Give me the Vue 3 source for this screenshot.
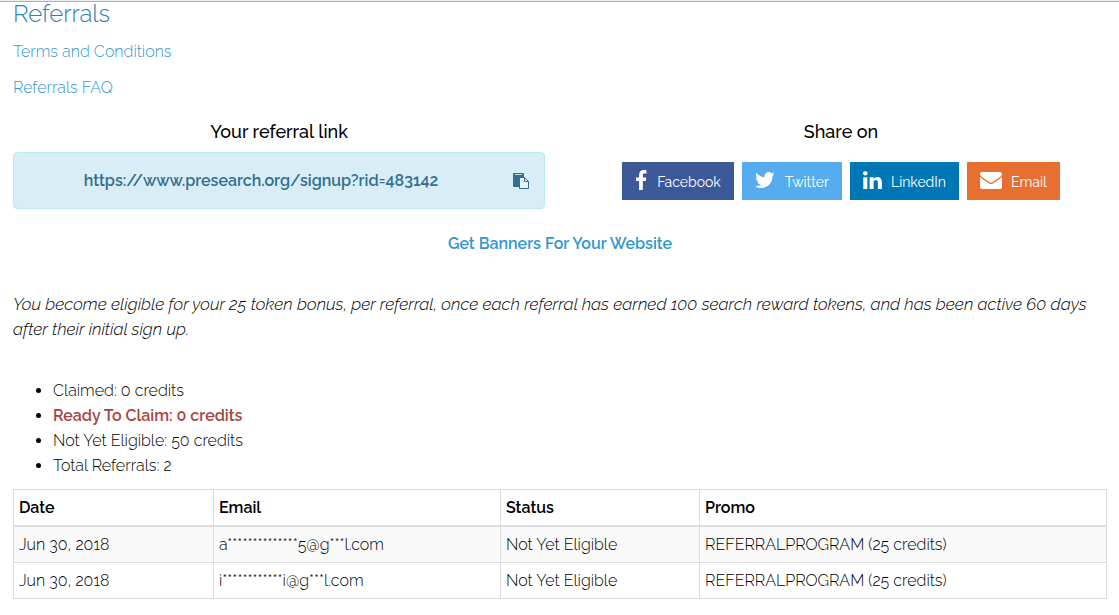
<template>
    <main class="referrals">
        <h1 class="title">Referrals</h1>
        <p class="doc-link"><a href="#terms">Terms and Conditions</a></p>
        <p class="doc-link"><a href="#faq">Referrals FAQ</a></p>

        <div class="share-row">
            <section>
                <h2 class="subtitle">Your referral link</h2>
                <div class="link-box">
                    <span class="link-text">{{ referralLink }}</span>
                    <button class="copy-button" aria-label="Copy referral link" @click="copyLink">
                        <svg width="16" height="16" viewBox="0 0 16 16">
                            <path d="M1 0h9q1 0 1 1v4H7v9H1q-1 0-1-1V1q0-1 1-1z" fill="currentColor" />
                            <path d="M2 1h7v1H2z" fill="#c3d9e4" />
                            <path d="M6.5 4.5h5l4 4v7h-9z" fill="#e6f4fa" stroke="currentColor" />
                            <path d="M11.5 4.5v4h4" fill="none" stroke="currentColor" />
                        </svg>
                    </button>
                </div>
            </section>

            <section>
                <h2 class="subtitle">Share on</h2>
                <div class="share-buttons">
                    <button
                        v-for="network in networks"
                        :key="network.name"
                        class="share-button"
                        :class="network.id"
                    >
                        <svg
                            :width="network.width"
                            height="20"
                            :viewBox="`0 0 ${network.width} 20`"
                            aria-hidden="true"
                        >
                            <path :d="network.icon" fill="currentColor" />
                        </svg>
                        <span class="share-name">{{ network.name }}</span>
                    </button>
                </div>
            </section>
        </div>

        <p class="banners"><a href="#banners">Get Banners For Your Website</a></p>

        <p class="terms">
            You become eligible for your 25 token bonus, per referral, once each referral has
            earned 100 search reward tokens, and has been active 60 days after their initial sign up.
        </p>

        <ul class="totals">
            <li>Claimed: {{ totals.claimed }} credits</li>
            <li><strong>Ready To Claim: {{ totals.ready }} credits</strong></li>
            <li>Not Yet Eligible: {{ totals.pending }} credits</li>
            <li>Total Referrals: {{ totals.referrals }}</li>
        </ul>

        <table class="referral-table">
            <thead>
                <tr>
                    <th class="col-date">Date</th>
                    <th class="col-email">Email</th>
                    <th class="col-status">Status</th>
                    <th>Promo</th>
                </tr>
            </thead>
            <tbody>
                <tr v-for="row in rows" :key="row.email">
                    <td>{{ row.date }}</td>
                    <td>{{ row.email }}</td>
                    <td>{{ row.status }}</td>
                    <td>{{ row.promo }}</td>
                </tr>
            </tbody>
        </table>
    </main>
</template>

<script setup>
import { ref } from "vue";

const referralLink = ref("https://www.presearch.org/signup?rid=483142");

const totals = ref({ claimed: 0, ready: 0, pending: 50, referrals: 2 });

const rows = ref([
    {
        date: "Jun 30, 2018",
        email: "a**************5@g***l.com",
        status: "Not Yet Eligible",
        promo: "REFERRALPROGRAM (25 credits)",
    },
    {
        date: "Jun 30, 2018",
        email: "i************i@g***l.com",
        status: "Not Yet Eligible",
        promo: "REFERRALPROGRAM (25 credits)",
    },
]);

const networks = [
    {
        id: "facebook",
        name: "Facebook",
        width: 13,
        icon: "M11.5 0.2v3.2H9.6C8.1 3.4 7.8 4.1 7.8 5.1v2.3h3.5l-.5 3.5h-3V20H4.1v-9.1H1V7.4h3.1V4.7C4.1 1.7 6 0 8.7 0c1.3 0 2.4.1 2.8.2z",
    },
    {
        id: "twitter",
        name: "Twitter",
        width: 21,
        icon: "M19.5 4.1c-.5.8-1.2 1.5-2 2v.5c0 5.3-4 11.4-11.4 11.4-2.2 0-4.3-.6-6.1-1.8 2.1.2 4.2-.4 5.9-1.7-1.7 0-3.2-1.2-3.7-2.8.6.1 1.2.1 1.8-.1C2.2 11.3.8 9.7.8 7.7c.5.3 1.1.5 1.8.5C.9 7 .3 4.7 1.4 2.9c2 2.5 5 4.1 8.2 4.2C9 4.4 11 2 13.5 2c1.1 0 2.2.5 2.9 1.3.9-.2 1.8-.5 2.5-1-.3 1-1 1.7-1.7 2.2.8-.1 1.6-.2 2.3-.4z",
    },
    {
        id: "linkedin",
        name: "LinkedIn",
        width: 19,
        icon: "M.3 7.2h4v11.8h-4zM2.3 1.2c1.4 0 2.3.9 2.3 2.1S3.7 5.4 2.3 5.4 0 4.5 0 3.3s.9-2.1 2.3-2.1zM6.6 7.2h4v1.7C11.2 8 12.2 6.9 14.3 6.9c2.6 0 4.6 1.7 4.6 5.4V19h-4v-6.3c0-1.6-.6-2.7-2-2.7-1.6 0-2.3 1.1-2.3 2.5V19H6.6z",
    },
    {
        id: "email",
        name: "Email",
        width: 22,
        icon: "M2 2h18c1.1 0 2 .8 2 1.9 0 1.3-1 2.4-2 3.1l-6.5 4.5c-.8.6-1.6 1.2-2.5 1.2s-1.7-.6-2.5-1.2L2 7C1.2 6.4 0 5.2 0 4c0-1.1.8-2 2-2zM0 7.1c.4.4.9.8 1.4 1.1l6.9 4.7c.8.6 1.7 1.2 2.7 1.2s1.9-.6 2.7-1.2l6.9-4.7c.5-.3 1-.7 1.4-1.1V17c0 1.1-.9 2-2 2H2c-1.1 0-2-.9-2-2z",
    },
];

const copyLink = () => {
    navigator.clipboard?.writeText(referralLink.value);
};
</script>

<style>
body {
    margin: 0;
    background: #fff;
}
</style>

<style scoped>
.referrals {
    padding: 1px 12px 16px 13px;
    border-top: 1px solid #eee;
    box-shadow: inset 0 1px #b0b0b0;
    font-family: Raleway, Lato, sans-serif;
    font-size: 16px;
    font-weight: 350;
    line-height: 25px;
    color: #000;
}

a {
    color: #3097d1;
    text-decoration: none;
}

a:hover {
    text-decoration: underline;
}

.title {
    margin: 0 0 13px;
    font-size: 24px;
    font-weight: 350;
    line-height: 24px;
    color: #2f80b3;
}

.doc-link {
    margin: 0 0 11px;
}

.share-row {
    display: grid;
    grid-template-columns: 1fr 1fr;
    gap: 30px;
    margin-top: 19px;
    text-align: center;
}

.subtitle {
    margin: 0 0 8px;
    font-size: 18px;
    font-weight: 500;
    line-height: 25px;
}

.link-box {
    display: flex;
    align-items: center;
    gap: 20px;
    padding: 15px;
    border: 1px solid #bce8f1;
    border-radius: 4px;
    background: #d9edf7;
    color: #31708f;
}

.link-text {
    flex: 1;
    font-weight: 600;
}

.copy-button {
    display: flex;
    padding: 0;
    border: 0;
    background: none;
    color: #31708f;
    cursor: pointer;
}

.share-buttons {
    display: flex;
    justify-content: center;
    gap: 8px;
    padding-top: 10px;
}

.share-button {
    display: flex;
    align-items: center;
    gap: 9px;
    height: 38px;
    padding: 0 13px 2px;
    border: 0;
    color: #fff;
    font: inherit;
    font-size: 14px;
    font-weight: 400;
    cursor: pointer;
}

.share-name {
    padding-top: 5px;
}

.facebook {
    background: #3b5998;
}

.twitter {
    background: #55acee;
}

.linkedin {
    background: #0077b5;
}

.email {
    background: #e86f32;
}

.banners {
    margin: 22px 0 36px;
    text-align: center;
    font-weight: 600;
}

.terms {
    margin: 0 0 36px;
    font-size: 17px;
    font-style: italic;
    font-weight: 300;
}

.totals {
    margin: 0 0 11px;
    padding-left: 40px;
}

.totals strong {
    font-weight: 600;
    color: #a94442;
}

.referral-table {
    width: 100%;
    border-collapse: collapse;
}

.referral-table th,
.referral-table td {
    box-sizing: border-box;
    padding: 5px;
    border: 1px solid #ddd;
    text-align: left;
}

.referral-table th {
    border-bottom-width: 2px;
    font-weight: 600;
}

.referral-table tbody tr:nth-child(odd) {
    background: #f9f9f9;
}

.col-date {
    width: 200px;
}

.col-email {
    width: 287px;
}

.col-status {
    width: 199px;
}
</style>
